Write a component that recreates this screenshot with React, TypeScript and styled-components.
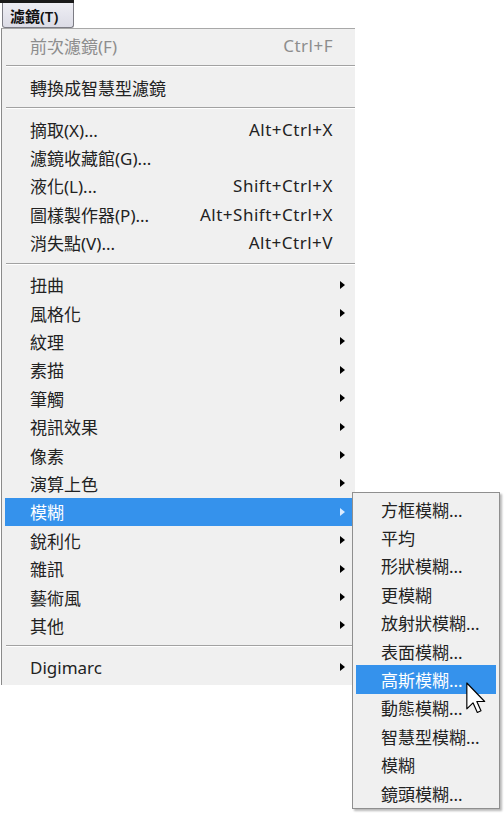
import styled, { createGlobalStyle } from "styled-components";

const GlobalStyle = createGlobalStyle`
  html, body {
    margin: 0;
    padding: 0;
    background: #ffffff;
  }
  body {
    font-family: "Noto Sans", "Noto Sans CJK TC", sans-serif;
  }
`;

const Screen = styled.div`
  position: relative;
  width: 504px;
  height: 815px;
  overflow: hidden;
`;

const MenuBar = styled.div`
  display: flex;
  width: 72px;
  border-top: 3px solid #1a1a1a;
  padding-left: 2px;
  height: 25px;
`;

const MenuTitle = styled.div`
  flex: 1;
  display: flex;
  align-items: center;
  padding-left: 7px;
  border: 1px solid #7c7c84;
  border-top: none;
  border-radius: 0 0 3px 3px;
  background: linear-gradient(#eeeef4, #dcdce6);
  font-size: 15px;
  font-weight: 600;
  color: #111;
`;

const MainMenu = styled.div`
  margin-left: 1px;
  width: 353px;
  padding: 2px 0 3px;
  background: #f0f0f0;
  border-top: 1px solid #a8a8a8;
  border-left: 1px solid #8a8a8a;
`;

const SubMenu = styled.div`
  position: absolute;
  left: 352px;
  top: 492px;
  width: 146px;
  padding: 2px 0 1px;
  background: #f0f0f0;
  border: 1px solid #8f8f8f;
  box-shadow: 2px 2px 2px rgba(0, 0, 0, 0.28);
`;

const Item = styled.div<{ $active?: boolean; $disabled?: boolean }>`
  display: flex;
  align-items: center;
  height: 28.4px;
  margin: 0 3px;
  padding: 0 7px 0 25px;
  font-size: 17px;
  color: ${(p) => (p.$active ? "#ffffff" : p.$disabled ? "#8d8d8d" : "#222222")};
  background: ${(p) => (p.$active ? "#3592ec" : "transparent")};
  white-space: nowrap;
`;

const Label = styled.span`
  flex: 1;
`;

const Shortcut = styled.span<{ $disabled?: boolean }>`
  margin-right: 12px;
  letter-spacing: 0.5px;
  color: ${(p) => (p.$disabled ? "#8d8d8d" : "#222222")};
`;

const Arrow = styled.span<{ $active?: boolean }>`
  width: 0;
  height: 0;
  border-top: 4.5px solid transparent;
  border-bottom: 4.5px solid transparent;
  border-left: 5px solid ${(p) => (p.$active ? "#dcecff" : "#000")};
`;

const Separator = styled.div`
  height: 13.6px;
  display: flex;
  align-items: center;
  padding-left: 4px;
  &::after {
    content: "";
    flex: 1;
    height: 1px;
    background: #a2a2a2;
    border-bottom: 1px solid #ffffff;
  }
`;

const Cursor = styled.svg`
  position: absolute;
  left: 466px;
  top: 682px;
`;

type Entry =
  | { sep: true }
  | { label: string; shortcut?: string; sub?: boolean; disabled?: boolean; active?: boolean };

const mainItems: Entry[] = [
  { label: "前次濾鏡(F)", shortcut: "Ctrl+F", disabled: true },
  { sep: true },
  { label: "轉換成智慧型濾鏡" },
  { sep: true },
  { label: "摘取(X)...", shortcut: "Alt+Ctrl+X" },
  { label: "濾鏡收藏館(G)..." },
  { label: "液化(L)...", shortcut: "Shift+Ctrl+X" },
  { label: "圖樣製作器(P)...", shortcut: "Alt+Shift+Ctrl+X" },
  { label: "消失點(V)...", shortcut: "Alt+Ctrl+V" },
  { sep: true },
  { label: "扭曲", sub: true },
  { label: "風格化", sub: true },
  { label: "紋理", sub: true },
  { label: "素描", sub: true },
  { label: "筆觸", sub: true },
  { label: "視訊效果", sub: true },
  { label: "像素", sub: true },
  { label: "演算上色", sub: true },
  { label: "模糊", sub: true, active: true },
  { label: "銳利化", sub: true },
  { label: "雜訊", sub: true },
  { label: "藝術風", sub: true },
  { label: "其他", sub: true },
  { sep: true },
  { label: "Digimarc", sub: true },
];

const blurItems = [
  "方框模糊...",
  "平均",
  "形狀模糊...",
  "更模糊",
  "放射狀模糊...",
  "表面模糊...",
  "高斯模糊...",
  "動態模糊...",
  "智慧型模糊...",
  "模糊",
  "鏡頭模糊...",
];

export default function App() {
  return (
    <Screen>
      <GlobalStyle />
      <MenuBar>
        <MenuTitle>濾鏡(T)</MenuTitle>
      </MenuBar>
      <MainMenu>
        {mainItems.map((it, i) =>
          "sep" in it ? (
            <Separator key={i} />
          ) : (
            <Item key={i} $active={it.active} $disabled={it.disabled}>
              <Label>{it.label}</Label>
              {it.shortcut && <Shortcut $disabled={it.disabled}>{it.shortcut}</Shortcut>}
              {it.sub && <Arrow $active={it.active} />}
            </Item>
          )
        )}
      </MainMenu>
      <SubMenu>
        {blurItems.map((label, i) => (
          <Item key={i} $active={label === "高斯模糊..."}>
            <Label>{label}</Label>
          </Item>
        ))}
      </SubMenu>
      <Cursor width="20" height="32" viewBox="0 0 12 19">
        <path
          d="M0.5 0.5 L0.5 16 L4.2 12.4 L6.8 18.2 L9 17.2 L6.5 11.6 L11.2 11.6 Z"
          fill="#ffffff"
          stroke="#000000"
          strokeWidth="0.7"
          strokeLinejoin="round"
        />
      </Cursor>
    </Screen>
  );
}
